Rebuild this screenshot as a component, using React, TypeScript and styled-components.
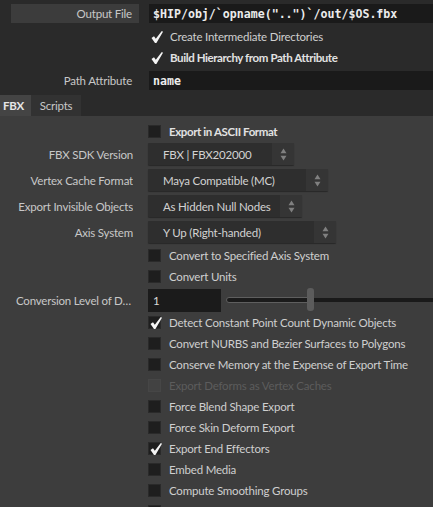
import React from "react";
import styled, { createGlobalStyle } from "styled-components";

const Global = createGlobalStyle`
  html, body { margin: 0; padding: 0; background: #3d3d3d; }
  body { font-family: "Lato", "Noto Sans", sans-serif; font-size: 11.5px; letter-spacing: -0.2px; color: #c8c8c8; overflow: hidden; }
  * { box-sizing: border-box; }
`;

const Page = styled.div`
  width: 433px;
  height: 507px;
  overflow: hidden;
  display: flex;
  flex-direction: column;
`;

const Top = styled.div`
  background: #2a2a2a;
  padding-top: 4px;
  display: flex;
  flex-direction: column;
`;

const ParmRow = styled.div<{ $mt?: number }>`
  display: flex;
  align-items: center;
  height: 19px;
  margin-top: ${(p) => p.$mt ?? 0}px;
`;

const LabelBox = styled.div<{ $boxed?: boolean }>`
  margin-left: 11px;
  width: 128px;
  height: 19px;
  padding-right: 7px;
  display: flex;
  align-items: center;
  justify-content: flex-end;
  background: ${(p) => (p.$boxed ? "#3c3c3c" : "transparent")};
  color: #c8c8c8;
  white-space: nowrap;
`;

const TextField = styled.div`
  margin-left: 10px;
  flex: 1;
  height: 19px;
  background: #1a1a1a;
  display: flex;
  align-items: center;
  padding-left: 4px;
  font-family: "DejaVu Sans Mono", "Liberation Mono", monospace;
  font-weight: bold;
  font-size: 11.6px;
  letter-spacing: 0;
  color: #ececec;
  white-space: pre;
  overflow: hidden;
`;

const CheckRow = styled.div<{ $mt?: number; $indent?: number }>`
  display: flex;
  align-items: center;
  height: 21px;
  margin-top: ${(p) => p.$mt ?? 0}px;
  padding-left: ${(p) => p.$indent ?? 148}px;
  gap: 8px;
`;

const Box = styled.div<{ $disabled?: boolean; $bare?: boolean }>`
  width: 13px;
  height: 13px;
  flex: none;
  position: relative;
  background: ${(p) => (p.$bare ? "transparent" : p.$disabled ? "#424242" : "#1e1e1e")};
  border: 1px solid ${(p) => (p.$bare ? "transparent" : p.$disabled ? "#464646" : "#2a2a2a")};
  svg { position: absolute; left: 1px; top: -1px; }
`;

const CheckText = styled.span<{ $bold?: boolean; $disabled?: boolean }>`
  white-space: nowrap;
  font-weight: ${(p) => (p.$bold ? 700 : 400)};
  letter-spacing: ${(p) => (p.$bold ? "-0.4px" : "-0.2px")};
  color: ${(p) => (p.$disabled ? "#5c5c5c" : p.$bold ? "#e2e2e2" : "#cfcfcf")};
`;

const Tick = () => (
  <svg width="13" height="14" viewBox="0 0 13 14">
    <path d="M0.5 8 L3 6.2 L4.8 8.8 L10.8 1 L12 1.8 L5.4 13 L4 13 Z" fill="#f4f4f4" />
  </svg>
);

const Check = ({
  label,
  checked,
  bold,
  disabled,
  bare,
  mt,
  indent,
}: {
  label: string;
  checked?: boolean;
  bold?: boolean;
  disabled?: boolean;
  bare?: boolean;
  mt?: number;
  indent?: number;
}) => (
  <CheckRow $mt={mt} $indent={indent}>
    <Box $disabled={disabled} $bare={bare}>{checked && <Tick />}</Box>
    <CheckText $bold={bold} $disabled={disabled}>{label}</CheckText>
  </CheckRow>
);

const TabBar = styled.div`
  margin-top: 5px;
  height: 21px;
  display: flex;
  background: #2a2a2a;
`;

const Tab = styled.div<{ $active?: boolean }>`
  height: 21px;
  display: flex;
  align-items: center;
  justify-content: center;
  width: ${(p) => (p.$active ? "31px" : "50px")};
  padding-right: ${(p) => (p.$active ? "4px" : "0")};
  background: ${(p) => (p.$active ? "#444444" : "#323232")};
  font-weight: ${(p) => (p.$active ? 700 : 400)};
  color: ${(p) => (p.$active ? "#e6e6e6" : "#c8c8c8")};
`;

const Content = styled.div`
  flex: 1;
  background: #3d3d3d;
  padding-top: 5px;
  display: flex;
  flex-direction: column;
`;

const Row = styled.div<{ $mt?: number; $h?: number }>`
  display: grid;
  grid-template-columns: 133px 1fr;
  column-gap: 15px;
  align-items: center;
  height: ${(p) => p.$h ?? 22}px;
  margin-top: ${(p) => p.$mt ?? 0}px;
`;

const RowLabel = styled.div`
  padding-left: 16px;
  text-align: right;
  white-space: nowrap;
  overflow: hidden;
  text-overflow: ellipsis;
  color: #c8c8c8;
`;

const Menu = styled.div<{ $w: number }>`
  width: ${(p) => p.$w}px;
  height: 22px;
  display: flex;
  background: #2e2e2e;
  box-shadow: 0 1px 1px rgba(0, 0, 0, 0.35);
  border-radius: 1px;
`;

const MenuText = styled.div`
  flex: 1;
  display: flex;
  align-items: center;
  padding-left: 15px;
  color: #d2d2d2;
  white-space: nowrap;
`;

const MenuArrow = styled.div`
  width: 22px;
  background: #353535;
  display: flex;
  align-items: center;
  justify-content: center;
`;

const Arrows = () => (
  <svg width="7" height="13" viewBox="0 0 7 13">
    <path d="M3.5 0.5 L6.5 5.2 L0.5 5.2 Z" fill="#808080" />
    <path d="M0.5 7.8 L6.5 7.8 L3.5 12.5 Z" fill="#808080" />
  </svg>
);

const Dropdown = ({ w, value }: { w: number; value: string }) => (
  <Menu $w={w}>
    <MenuText>{value}</MenuText>
    <MenuArrow>
      <Arrows />
    </MenuArrow>
  </Menu>
);

const SliderWrap = styled.div`
  display: flex;
  align-items: center;
  gap: 5px;
  height: 24px;
`;

const NumField = styled.div`
  width: 73px;
  height: 23px;
  background: #1b1b1b;
  display: flex;
  align-items: center;
  padding-left: 5px;
  color: #d8d8d8;
`;

const Track = styled.div`
  flex: 1;
  height: 24px;
  display: flex;
  align-items: center;
  position: relative;
`;

const TrackFill = styled.div`
  width: 84px;
  height: 6px;
  border: 1px solid #5f5f5f;
  border-radius: 3px 0 0 3px;
  background: #1b1b1b;
`;

const TrackRest = styled.div`
  flex: 1;
  height: 4px;
  background: #1a1a1a;
`;

const Handle = styled.div`
  position: absolute;
  left: 81px;
  top: 0;
  width: 7px;
  height: 23px;
  border-radius: 3px;
  background: #5c5c5c;
`;

export default function App() {
  return (
    <Page>
      <Global />
      <Top>
        <ParmRow>
          <LabelBox $boxed>Output File</LabelBox>
          <TextField>{'$HIP/obj/`opname("..")`/out/$OS.fbx'}</TextField>
        </ParmRow>
        <Check label="Create Intermediate Directories" checked bare mt={3} indent={149} />
        <Check label="Build Hierarchy from Path Attribute" checked bare bold indent={149} />
        <ParmRow $mt={3}>
          <LabelBox>Path Attribute</LabelBox>
          <TextField>name</TextField>
        </ParmRow>
        <TabBar>
          <Tab $active>FBX</Tab>
          <Tab>Scripts</Tab>
        </TabBar>
      </Top>
      <Content>
        <Check label="Export in ASCII Format" bold />
        <Row $mt={1}>
          <RowLabel>FBX SDK Version</RowLabel>
          <Dropdown w={146} value="FBX | FBX202000" />
        </Row>
        <Row $mt={4}>
          <RowLabel>Vertex Cache Format</RowLabel>
          <Dropdown w={180} value="Maya Compatible (MC)" />
        </Row>
        <Row $mt={4}>
          <RowLabel>Export Invisible Objects</RowLabel>
          <Dropdown w={154} value="As Hidden Null Nodes" />
        </Row>
        <Row $mt={4}>
          <RowLabel>Axis System</RowLabel>
          <Dropdown w={188} value="Y Up (Right-handed)" />
        </Row>
        <Check label="Convert to Specified Axis System" mt={2} />
        <Check label="Convert Units" />
        <Row $h={24} $mt={1}>
          <RowLabel>Conversion Level of Detail</RowLabel>
          <SliderWrap>
            <NumField>1</NumField>
            <Track>
              <TrackFill />
              <TrackRest />
              <Handle />
            </Track>
          </SliderWrap>
        </Row>
        <Check label="Detect Constant Point Count Dynamic Objects" checked />
        <Check label="Convert NURBS and Bezier Surfaces to Polygons" />
        <Check label="Conserve Memory at the Expense of Export Time" />
        <Check label="Export Deforms as Vertex Caches" disabled />
        <Check label="Force Blend Shape Export" />
        <Check label="Force Skin Deform Export" />
        <Check label="Export End Effectors" checked />
        <Check label="Embed Media" />
        <Check label="Compute Smoothing Groups" />
        <Check label="Export Animation Only" />
      </Content>
    </Page>
  );
}
